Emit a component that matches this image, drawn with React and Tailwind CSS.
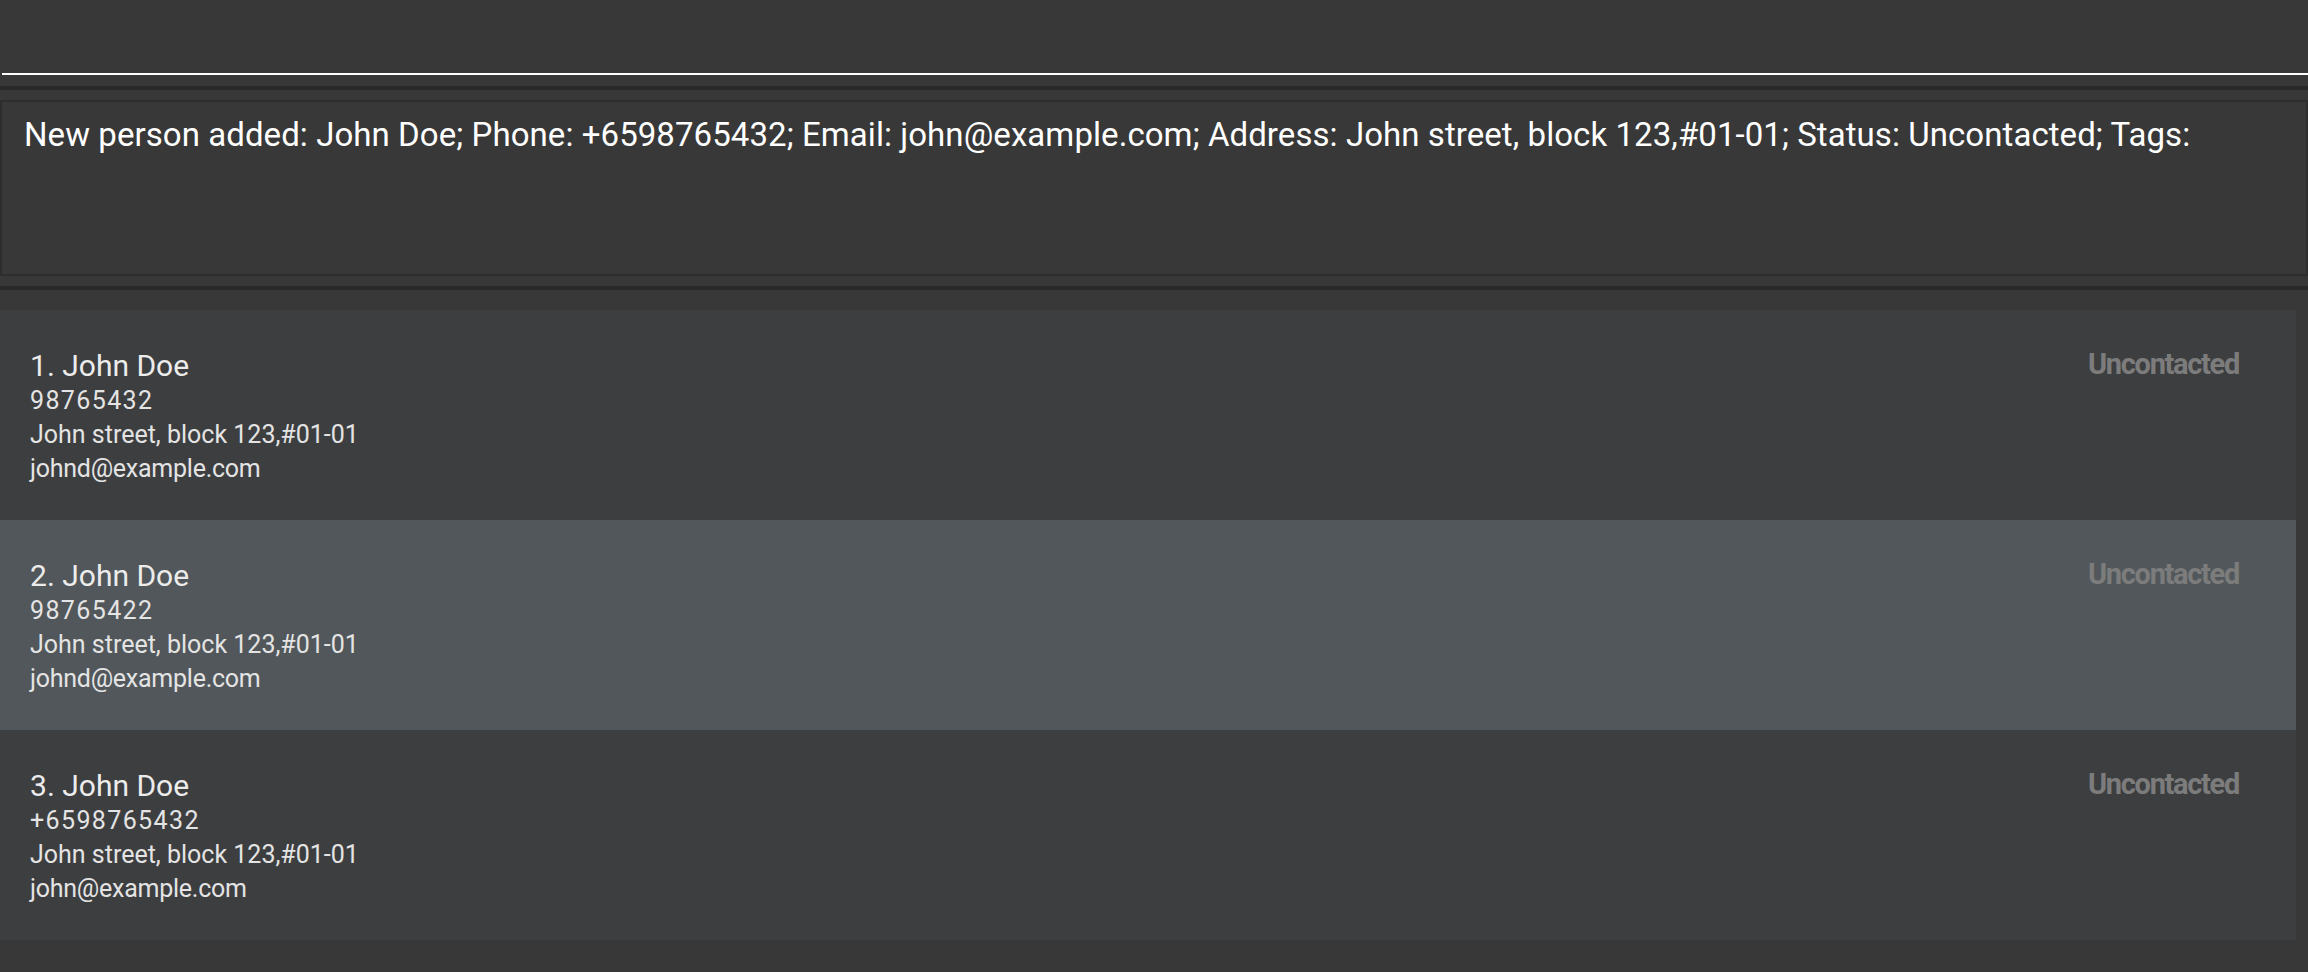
const persons = [
  { name: "John Doe", phone: "98765432", address: "John street, block 123,#01-01", email: "johnd@example.com", status: "Uncontacted" },
  { name: "John Doe", phone: "98765422", address: "John street, block 123,#01-01", email: "johnd@example.com", status: "Uncontacted" },
  { name: "John Doe", phone: "+6598765432", address: "John street, block 123,#01-01", email: "john@example.com", status: "Uncontacted" },
];

const SELECTED = 1;

function PersonCard({ person, index, selected }) {
  return (
    <div
      className={
        "h-[210px] flex items-start justify-between pl-[30px] pr-[57px] pt-[38px] " +
        (selected ? "bg-[#51575a]" : "bg-[#3d3e40]")
      }
    >
      <div className="flex flex-col">
        <span className="text-[30px] leading-[36px] text-[#ececec]">
          {index + 1}. {person.name}
        </span>
        <span className="text-[25px] leading-[34px] text-[#e4e4e4] tracking-[0.055em]">{person.phone}</span>
        <span className="text-[25px] leading-[34px] text-[#e4e4e4]">{person.address}</span>
        <span className="text-[25px] leading-[34px] text-[#e4e4e4] tracking-[-0.01em]">{person.email}</span>
      </div>
      <span className="-mt-[1px] text-[29px] leading-[35px] font-bold text-[#7c7c7c] tracking-[-0.045em]">
        {person.status}
      </span>
    </div>
  );
}

export default function App() {
  return (
    <div
      className="w-[2308px] h-[972px] bg-[#383838] flex flex-col overflow-hidden"
      style={{ fontFamily: "Roboto, 'Noto Sans', sans-serif" }}
    >
      <div className="h-[75px] ml-[2px] border-b-2 border-white shrink-0" />

      <div className="h-[4px] mt-[11px] bg-[#2a2a2a] shrink-0" />

      <div className="h-[176px] mt-[10px] border-2 border-[#2d2d2d] pl-[22px] pt-[13px] shrink-0">
        <p className="text-[33px] leading-[40px] text-white tracking-[0.002em] whitespace-nowrap">
          New person added: John Doe; Phone: +6598765432; Email: john@example.com; Address: John street, block
          123,#01-01; Status: Uncontacted; Tags:
        </p>
      </div>

      <div className="h-[4px] mt-[10px] bg-[#2a2a2a] shrink-0" />

      <div className="mt-[20px] flex">
        <div className="w-[2296px] flex flex-col">
          {persons.map((p, i) => (
            <PersonCard key={i} person={p} index={i} selected={i === SELECTED} />
          ))}
        </div>
      </div>
    </div>
  );
}
